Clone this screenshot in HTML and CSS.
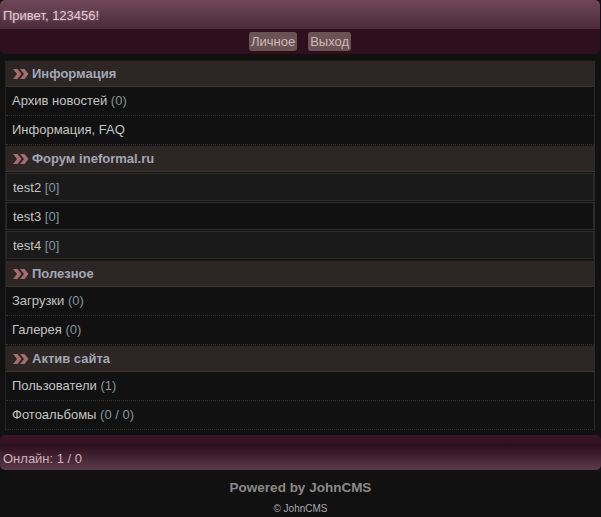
FILE: index.html
```html
<!DOCTYPE html>
<html lang="ru">
<head>
    <meta charset="UTF-8">
    <meta name="viewport" content="width=device-width, initial-scale=1.0">
    <title>ineformal.ru</title>
    <link rel="stylesheet" href="styles.css">
</head>
<body>
    <div class="header">
        <div class="hello">Привет, 123456!</div>
        <div class="tmn">
            <a href="#" class="btn">Личное</a>
            <a href="#" class="btn">Выход</a>
        </div>
    </div>

    <div class="maintxt">
        <div class="phdr">
            <svg class="arr" width="16" height="10" viewBox="0 0 16 10"><polygon points="0,0 4.5,0 8.5,5 4.5,10 0,10 4,5"/><polygon points="7,0 11.5,0 15.5,5 11.5,10 7,10 11,5"/></svg>
            Информация
        </div>
        <div class="menu"><a href="#">Архив новостей</a> <span class="cnt">(0)</span></div>
        <div class="menu"><a href="#">Информация, FAQ</a></div>

        <div class="phdr">
            <svg class="arr" width="16" height="10" viewBox="0 0 16 10"><polygon points="0,0 4.5,0 8.5,5 4.5,10 0,10 4,5"/><polygon points="7,0 11.5,0 15.5,5 11.5,10 7,10 11,5"/></svg>
            Форум ineformal.ru
        </div>
        <div class="list1"><a href="#">test2</a> <span class="cnt">[0]</span></div>
        <div class="list2"><a href="#">test3</a> <span class="cnt">[0]</span></div>
        <div class="list1"><a href="#">test4</a> <span class="cnt">[0]</span></div>

        <div class="phdr">
            <svg class="arr" width="16" height="10" viewBox="0 0 16 10"><polygon points="0,0 4.5,0 8.5,5 4.5,10 0,10 4,5"/><polygon points="7,0 11.5,0 15.5,5 11.5,10 7,10 11,5"/></svg>
            Полезное
        </div>
        <div class="menu"><a href="#">Загрузки</a> <span class="cnt">(0)</span></div>
        <div class="menu"><a href="#">Галерея</a> <span class="cnt">(0)</span></div>

        <div class="phdr">
            <svg class="arr" width="16" height="10" viewBox="0 0 16 10"><polygon points="0,0 4.5,0 8.5,5 4.5,10 0,10 4,5"/><polygon points="7,0 11.5,0 15.5,5 11.5,10 7,10 11,5"/></svg>
            Актив сайта
        </div>
        <div class="menu"><a href="#">Пользователи</a> <span class="cnt">(1)</span></div>
        <div class="menu"><a href="#">Фотоальбомы</a> <span class="cnt">(0 / 0)</span></div>
    </div>

    <div class="footer">Онлайн: 1 / 0</div>
    <div class="powered">Powered by JohnCMS</div>
    <div class="copy">© JohnCMS</div>
</body>
</html>
```

FILE: styles.css
```css
body {
    font-family: "Liberation Sans", Arial, sans-serif;
    font-size: 13px;
    margin: 0;
    padding: 0;
    background-color: #111;
    color: #c4c4c4;
}
a {
    color: #c4c4c4;
    text-decoration: none;
}
.header {
    border-radius: 5px;
    overflow: hidden;
    margin-right: 1px;
}
.hello {
    height: 29px;
    line-height: 32px;
    padding-left: 3px;
    font-size: 13px;
    color: #e0cbd3;
    text-shadow: 0 0 3px #a07888;
    background: linear-gradient(#6f4759, #4b2b3a);
}
.tmn {
    height: 25px;
    display: flex;
    justify-content: center;
    align-items: center;
    gap: 11px;
    background-color: #2e0f1e;
}
.btn {
    display: inline-block;
    padding: 1px 2px;
    font-size: 13px;
    line-height: 17px;
    color: #d0b8b4;
    background-color: #6b5254;
    border-radius: 3px;
}
.maintxt {
    margin: 6px 6px 0 5px;
    border-left: 1px solid #222;
    border-right: 1px solid #2a2a2a;
    border-bottom: 1px dotted #333;
}
.phdr {
    height: 25px;
    display: flex;
    align-items: center;
    gap: 3px;
    padding-left: 7px;
    font-size: 13px;
    font-weight: bold;
    color: #a2a8b6;
    background-color: #2e2525;
    border-top: 1px solid #1a1616;
    border-bottom: 1px solid #3c3434;
}
.arr {
    fill: #a26e70;
}
.menu {
    height: 28px;
    line-height: 28px;
    padding-left: 6px;
    background-color: #111;
    border-bottom: 1px dotted #333;
}
.menu:last-child {
    border-bottom: none;
}
.list1, .list2 {
    height: 26px;
    line-height: 28px;
    padding-left: 6px;
    margin: 1px 0;
    border: 1px solid #2c2c2c;
}
.list1 {
    background-color: #1a1a1a;
}
.list2 {
    background-color: #111;
}
.cnt {
    color: #86959a;
}
.footer {
    margin-top: 5px;
    height: 35px;
    line-height: 48px;
    padding-left: 3px;
    font-size: 13px;
    color: #cdb3bb;
    border-radius: 5px;
    background: linear-gradient(#3a1727 0%, #2e0f1e 30%, #5c3a4b 100%);
}
.powered {
    text-align: center;
    margin-top: 10px;
    font-size: 13.5px;
    font-weight: bold;
    color: #8a8a8a;
}
.copy {
    text-align: center;
    margin-top: 8px;
    font-size: 10px;
    color: #a8a8b0;
}
```
